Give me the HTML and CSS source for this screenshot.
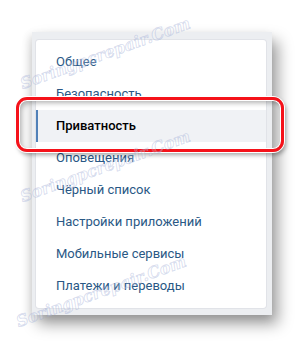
FILE: index.html
```html
<!DOCTYPE html>
<html lang="ru">
<head>
    <meta charset="UTF-8">
    <title>Настройки</title>
    <link rel="stylesheet" href="styles.css">
</head>
<body>
    <div class="stage">
        <div class="frame">
            <ul class="menu">
                <li class="menu-item">Общее</li>
                <li class="menu-item">Безопасность</li>
                <li class="menu-item active">Приватность</li>
                <li class="menu-item">Оповещения</li>
                <li class="menu-item">Чёрный список</li>
                <li class="menu-item">Настройки приложений</li>
                <li class="menu-item">Мобильные сервисы</li>
                <li class="menu-item">Платежи и переводы</li>
            </ul>
        </div>

        <!-- red marker round the selected item -->
        <div class="marker"></div>

        <!-- watermark -->
        <div class="watermark wm-1">Soringpcrepair.Com</div>
        <div class="watermark wm-2">Soringpcrepair.Com</div>
        <div class="watermark wm-3">Soringpcrepair.Com</div>
    </div>
</body>
</html>
```

FILE: styles.css
```css
body {
    margin: 0;
    background-color: #ffffff;
    font-family: Roboto, "Open Sans", Arial, sans-serif;
}
.stage {
    position: relative;
    width: 304px;
    height: 349px;
    padding: 32px 0 0 32px;
    box-sizing: border-box;
    overflow: hidden;
}
.frame {
    width: 240px;
    height: 283px;
    box-sizing: border-box;
    padding: 8px 6px 7px 4px;
    background-color: #eceef1;
    box-shadow: 6px 9px 14px rgba(0, 0, 0, 0.38), -3px 3px 8px rgba(0, 0, 0, 0.1);
}
.menu {
    list-style: none;
    margin: 0;
    padding: 6px 0;
    background-color: #ffffff;
    border-radius: 3px;
    box-shadow: 0 0 0 1px #e1e3e8;
}
.menu-item {
    height: 32px;
    line-height: 32px;
    padding-left: 20px;
    font-size: 13px;
    color: #2a5885;
}
.menu-item.active {
    padding-left: 18px;
    border-left: 2px solid #5181b8;
    background-color: #f0f2f5;
    color: #000000;
    font-weight: 500;
}
.marker {
    position: absolute;
    left: 16px;
    top: 97px;
    width: 268px;
    height: 55px;
    box-sizing: border-box;
    border: 3px solid #f5121a;
    border-radius: 11px;
    box-shadow: 0 0 0 1px #ffffff, 2px 3px 4px rgba(0, 0, 0, 0.35),
        inset 0 0 0 1px #ffffff, inset 3px 3px 5px rgba(0, 0, 0, 0.3);
}
.watermark {
    position: absolute;
    font-family: "DejaVu Serif", serif;
    font-style: italic;
    font-weight: bold;
    font-size: 16px;
    color: rgba(255, 255, 255, 0.2);
    -webkit-text-stroke: 0.8px rgba(150, 165, 210, 0.4);
    transform-origin: left bottom;
    transform: rotate(-20deg);
    white-space: nowrap;
}
.wm-1 {
    left: 24px;
    top: 74px;
}
.wm-2 {
    left: 24px;
    top: 187px;
}
.wm-3 {
    left: 20px;
    top: 312px;
}
```
